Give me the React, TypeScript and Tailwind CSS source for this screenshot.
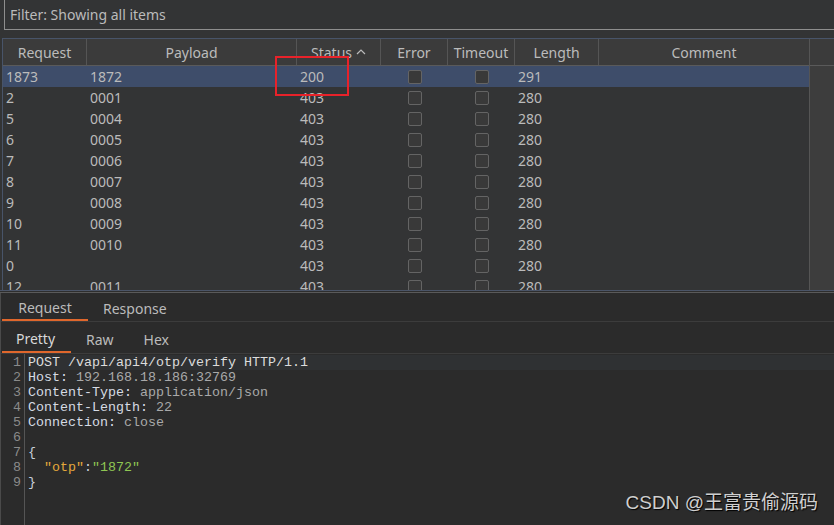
import React from "react";

const cols = [
  { name: "Request", w: 84 },
  { name: "Payload", w: 210 },
  { name: "Status", w: 84 },
  { name: "Error", w: 67 },
  { name: "Timeout", w: 67 },
  { name: "Length", w: 84 },
  { name: "Comment", w: 210 },
];

const rows = [
  ["1873", "1872", "200", "291"],
  ["2", "0001", "403", "280"],
  ["5", "0004", "403", "280"],
  ["6", "0005", "403", "280"],
  ["7", "0006", "403", "280"],
  ["8", "0007", "403", "280"],
  ["9", "0008", "403", "280"],
  ["10", "0009", "403", "280"],
  ["11", "0010", "403", "280"],
  ["0", "", "403", "280"],
  ["12", "0011", "403", "280"],
];

function Box() {
  return <div className="w-[14px] h-[14px] rounded-[2px] border border-[#646464] bg-[#393939]" />;
}

export default function App() {
  return (
    <div
      className="relative w-[834px] h-[525px] overflow-hidden bg-[#333435] text-[#bbbbbb] flex flex-col"
      style={{ fontFamily: '"Noto Sans", "Open Sans", sans-serif' }}
    >
      {/* filter */}
      <div className="h-[30px] ml-[4px] border-l border-b border-[#8e8e8e] flex items-center pl-[5px] text-[14px] shrink-0">
        Filter: Showing all items
      </div>
      <div className="h-[8px] shrink-0" />
      {/* table */}
      <div className="h-[252px] ml-[2px] border-l border-t border-[#485469] flex shrink-0 overflow-hidden">
        <div className="w-[806px] flex flex-col">
          <div className="h-[27px] flex bg-[#3b3b3b] border-b border-[#5a5a5a] shrink-0">
            {cols.map((c, i) => (
              <div
                key={c.name}
                style={{ width: c.w }}
                className={`flex items-center justify-center text-[14px] border-r border-[#555555] ${i === 6 ? "border-r-0" : ""}`}
              >
                {c.name}
                {c.name === "Status" && (
                  <svg width="10" height="8" viewBox="0 0 10 8" className="ml-[4px]">
                    <path d="M1 6 L5 2 L9 6" stroke="#bbbbbb" strokeWidth="1.2" fill="none" />
                  </svg>
                )}
              </div>
            ))}
          </div>
          {rows.map((r, idx) => (
            <div
              key={idx}
              className={`h-[21px] flex items-center text-[14px] shrink-0 ${idx === 0 ? "bg-[#3e4d6a]" : ""}`}
            >
              <div className="w-[84px] pl-[3px]">{r[0]}</div>
              <div className="w-[210px] pl-[3px]">{r[1]}</div>
              <div className="w-[84px] pl-[3px]">{r[2]}</div>
              <div className="w-[67px] flex justify-center"><Box /></div>
              <div className="w-[67px] flex justify-center"><Box /></div>
              <div className="w-[84px] pl-[3px]">{r[3]}</div>
              <div className="w-[210px]" />
            </div>
          ))}
        </div>
        <div className="flex-1 flex flex-col border-l border-[#555555]">
          <div className="h-[27px] bg-[#3b3b3b] border-b border-[#5a5a5a]" />
          <div className="flex-1 bg-[#3d3d3d]" />
        </div>
      </div>
      <div className="h-[1px] bg-[#4b5568] shrink-0" />
      <div className="h-[1px] bg-[#2e2e2e] shrink-0" />
      <div className="h-[1px] bg-[#5a5a5a] shrink-0" />
      {/* bottom panel */}
      <div className="flex-1 bg-[#2b2b2b] border-l border-[#4a4a4a] flex flex-col">
        <div className="h-[29px] flex items-end border-b border-[#3c3c3c] shrink-0">
          <div className="w-[86px] h-full flex items-center justify-center pt-[2px] text-[14px] border-b-2 border-[#e0672c] ml-[1px]">
            Request
          </div>
          <div className="h-full flex items-center pt-[2px] pl-[15px] text-[14px]">Response</div>
        </div>
        <div className="h-[32px] flex items-end border-b border-[#3c3c3c] shrink-0">
          <div className="w-[69px] h-full flex items-center justify-center pt-[3px] text-[14px] text-[#d8d8d8] border-b-2 border-[#e0672c] ml-[1px] pr-[2px]">
            Pretty
          </div>
          <div className="h-full flex items-center pt-[3px] pl-[15px] text-[14px]">Raw</div>
          <div className="h-full flex items-center pt-[3px] pl-[30px] text-[14px]">Hex</div>
        </div>
        <div
          className="flex-1 flex text-[13.33px] leading-[15px]"
          style={{ fontFamily: '"Liberation Mono", "Courier New", monospace' }}
        >
          <div className="w-[24px] border-r border-[#555555] text-right pr-[3px] text-[#8a8a8a] pt-[1px]">
            {[1, 2, 3, 4, 5, 6, 7, 8, 9].map((n) => (
              <div key={n} className="h-[15px]">{n}</div>
            ))}
          </div>
          <div className="flex-1 pl-[3px] pt-[1px] whitespace-pre">
            <div className="h-[15px] text-[#dcdcdc] bg-[#2f3133]">POST /vapi/api4/otp/verify HTTP/1.1</div>
            <div className="h-[15px]"><span className="text-[#d6dbe4]">Host: </span><span className="text-[#a9a9a9]">192.168.18.186:32769</span></div>
            <div className="h-[15px]"><span className="text-[#d6dbe4]">Content-Type: </span><span className="text-[#a9a9a9]">application/json</span></div>
            <div className="h-[15px]"><span className="text-[#d6dbe4]">Content-Length: </span><span className="text-[#a9a9a9]">22</span></div>
            <div className="h-[15px]"><span className="text-[#d6dbe4]">Connection: </span><span className="text-[#a9a9a9]">close</span></div>
            <div className="h-[15px]"> </div>
            <div className="h-[15px] text-[#c8d0dc]">{"{"}</div>
            <div className="h-[15px]">
              {"  "}
              <span className="text-[#e5a83b]">"otp"</span>
              <span className="text-[#c8d0dc]">:</span>
              <span className="text-[#8fc653]">"1872"</span>
            </div>
            <div className="h-[15px] text-[#c8d0dc]">{"}"}</div>
          </div>
        </div>
      </div>

      {/* red highlight overlay */}
      <div className="absolute left-[275px] top-[56px] w-[74px] h-[40px] border-2 border-[#e8222a]" />

      {/* watermark */}
      <div
        className="absolute right-[16px] bottom-[8px] text-[19px] text-[#cfcfcf]"
        style={{
          fontFamily: '"Liberation Sans", "Noto Sans CJK SC", sans-serif',
          textShadow: "1px 1px 1px #000",
        }}
      >
        CSDN @王富贵偷源码
      </div>
    </div>
  );
}
